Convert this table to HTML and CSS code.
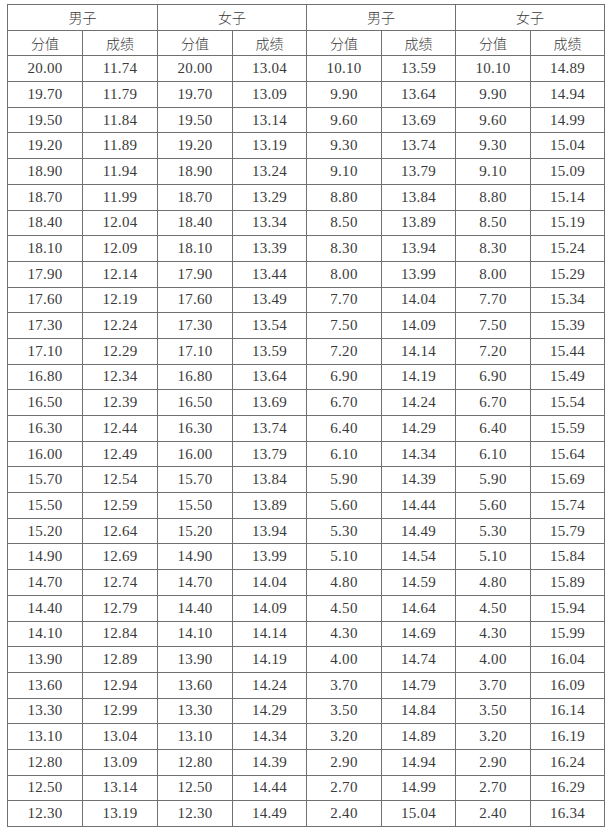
FILE: index.html
```html
<!DOCTYPE html>
<html lang="zh">
<head>
<meta charset="utf-8">
<link rel="stylesheet" href="styles.css">
</head>
<body>
<table class="score">
<colgroup><col class="c75"><col class="c75"><col class="c75"><col class="c74"><col class="c75"><col class="c74"><col class="c75"><col class="c74"></colgroup>
<thead>
<tr><th colspan="2">男子</th><th colspan="2">女子</th><th colspan="2">男子</th><th colspan="2">女子</th></tr>
<tr><th>分值</th><th>成绩</th><th>分值</th><th>成绩</th><th>分值</th><th>成绩</th><th>分值</th><th>成绩</th></tr>
</thead>
<tbody>
<tr><td>20.00</td><td>11.74</td><td>20.00</td><td>13.04</td><td>10.10</td><td>13.59</td><td>10.10</td><td>14.89</td></tr>
<tr><td>19.70</td><td>11.79</td><td>19.70</td><td>13.09</td><td>9.90</td><td>13.64</td><td>9.90</td><td>14.94</td></tr>
<tr><td>19.50</td><td>11.84</td><td>19.50</td><td>13.14</td><td>9.60</td><td>13.69</td><td>9.60</td><td>14.99</td></tr>
<tr><td>19.20</td><td>11.89</td><td>19.20</td><td>13.19</td><td>9.30</td><td>13.74</td><td>9.30</td><td>15.04</td></tr>
<tr><td>18.90</td><td>11.94</td><td>18.90</td><td>13.24</td><td>9.10</td><td>13.79</td><td>9.10</td><td>15.09</td></tr>
<tr><td>18.70</td><td>11.99</td><td>18.70</td><td>13.29</td><td>8.80</td><td>13.84</td><td>8.80</td><td>15.14</td></tr>
<tr><td>18.40</td><td>12.04</td><td>18.40</td><td>13.34</td><td>8.50</td><td>13.89</td><td>8.50</td><td>15.19</td></tr>
<tr><td>18.10</td><td>12.09</td><td>18.10</td><td>13.39</td><td>8.30</td><td>13.94</td><td>8.30</td><td>15.24</td></tr>
<tr><td>17.90</td><td>12.14</td><td>17.90</td><td>13.44</td><td>8.00</td><td>13.99</td><td>8.00</td><td>15.29</td></tr>
<tr><td>17.60</td><td>12.19</td><td>17.60</td><td>13.49</td><td>7.70</td><td>14.04</td><td>7.70</td><td>15.34</td></tr>
<tr><td>17.30</td><td>12.24</td><td>17.30</td><td>13.54</td><td>7.50</td><td>14.09</td><td>7.50</td><td>15.39</td></tr>
<tr><td>17.10</td><td>12.29</td><td>17.10</td><td>13.59</td><td>7.20</td><td>14.14</td><td>7.20</td><td>15.44</td></tr>
<tr><td>16.80</td><td>12.34</td><td>16.80</td><td>13.64</td><td>6.90</td><td>14.19</td><td>6.90</td><td>15.49</td></tr>
<tr><td>16.50</td><td>12.39</td><td>16.50</td><td>13.69</td><td>6.70</td><td>14.24</td><td>6.70</td><td>15.54</td></tr>
<tr><td>16.30</td><td>12.44</td><td>16.30</td><td>13.74</td><td>6.40</td><td>14.29</td><td>6.40</td><td>15.59</td></tr>
<tr><td>16.00</td><td>12.49</td><td>16.00</td><td>13.79</td><td>6.10</td><td>14.34</td><td>6.10</td><td>15.64</td></tr>
<tr><td>15.70</td><td>12.54</td><td>15.70</td><td>13.84</td><td>5.90</td><td>14.39</td><td>5.90</td><td>15.69</td></tr>
<tr><td>15.50</td><td>12.59</td><td>15.50</td><td>13.89</td><td>5.60</td><td>14.44</td><td>5.60</td><td>15.74</td></tr>
<tr><td>15.20</td><td>12.64</td><td>15.20</td><td>13.94</td><td>5.30</td><td>14.49</td><td>5.30</td><td>15.79</td></tr>
<tr><td>14.90</td><td>12.69</td><td>14.90</td><td>13.99</td><td>5.10</td><td>14.54</td><td>5.10</td><td>15.84</td></tr>
<tr><td>14.70</td><td>12.74</td><td>14.70</td><td>14.04</td><td>4.80</td><td>14.59</td><td>4.80</td><td>15.89</td></tr>
<tr><td>14.40</td><td>12.79</td><td>14.40</td><td>14.09</td><td>4.50</td><td>14.64</td><td>4.50</td><td>15.94</td></tr>
<tr><td>14.10</td><td>12.84</td><td>14.10</td><td>14.14</td><td>4.30</td><td>14.69</td><td>4.30</td><td>15.99</td></tr>
<tr><td>13.90</td><td>12.89</td><td>13.90</td><td>14.19</td><td>4.00</td><td>14.74</td><td>4.00</td><td>16.04</td></tr>
<tr><td>13.60</td><td>12.94</td><td>13.60</td><td>14.24</td><td>3.70</td><td>14.79</td><td>3.70</td><td>16.09</td></tr>
<tr><td>13.30</td><td>12.99</td><td>13.30</td><td>14.29</td><td>3.50</td><td>14.84</td><td>3.50</td><td>16.14</td></tr>
<tr><td>13.10</td><td>13.04</td><td>13.10</td><td>14.34</td><td>3.20</td><td>14.89</td><td>3.20</td><td>16.19</td></tr>
<tr><td>12.80</td><td>13.09</td><td>12.80</td><td>14.39</td><td>2.90</td><td>14.94</td><td>2.90</td><td>16.24</td></tr>
<tr><td>12.50</td><td>13.14</td><td>12.50</td><td>14.44</td><td>2.70</td><td>14.99</td><td>2.70</td><td>16.29</td></tr>
<tr><td>12.30</td><td>13.19</td><td>12.30</td><td>14.49</td><td>2.40</td><td>15.04</td><td>2.40</td><td>16.34</td></tr>
</tbody>
</table>
</body>
</html>
```
FILE: styles.css
```css
html, body {
  margin: 0;
  padding: 0;
  background: #ffffff;
}
body {
  padding: 4px 0 0 7px;
}
.score {
  border-collapse: collapse;
  table-layout: fixed;
  width: 597px;
  color: #3a3a3a;
}
.c75 { width: 75px; }
.c74 { width: 74px; }
.score th,
.score td {
  border: 1px solid #707070;
  padding: 0;
  height: 24.7px;
  text-align: center;
  vertical-align: middle;
  line-height: 1;
}
.score th {
  font-family: "Noto Sans CJK SC", sans-serif;
  font-weight: 300;
  font-size: 14px;
}
.score td {
  font-family: "Liberation Serif", serif;
  font-size: 15px;
  letter-spacing: 0.3px;
}
```
